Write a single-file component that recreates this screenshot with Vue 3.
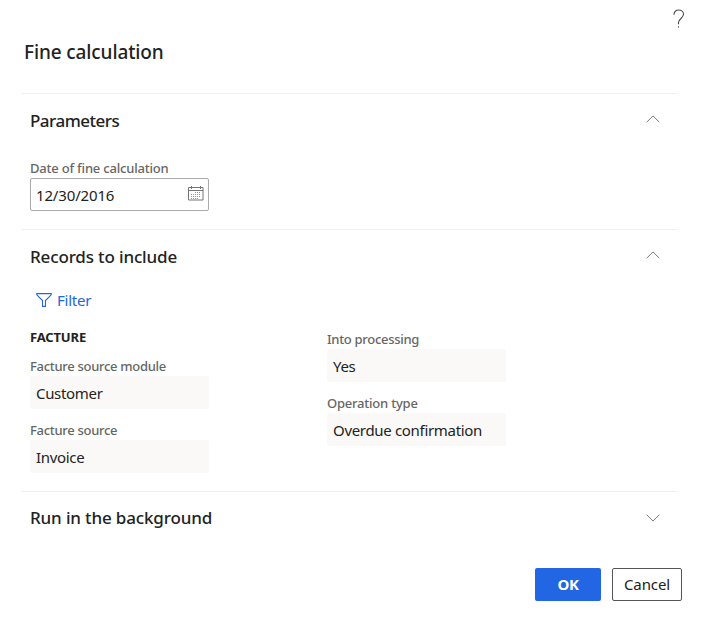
<script setup>
const left = [
  { label: 'Facture source module', value: 'Customer', cls: 'module' },
  { label: 'Facture source', value: 'Invoice', cls: 'source' },
]
const right = [
  { label: 'Into processing', value: 'Yes', cls: 'processing' },
  { label: 'Operation type', value: 'Overdue confirmation', cls: 'operation' },
]
const calendarRows = ['M7 6.5h6', 'M3 8.5h10', 'M3 10.5h10', 'M3 12.5h8']
</script>

<template>
  <main class="dialog">
    <div class="topbar">
      <svg class="help" width="12" height="20" viewBox="0 0 12 20" fill="none" stroke="#4a4a4a" stroke-width="1.1">
        <path d="M1 5.8C1 2.7 3 1 5.7 1s4.8 1.7 4.8 4.3c0 3.7-5 4.7-5 8.3v1.7" />
        <path d="M5.5 17.3v1.3" />
      </svg>
    </div>
    <h1>Fine calculation</h1>

    <section class="parameters">
      <header>
        <h2 class="h-param">Parameters</h2>
        <svg class="chev" width="14" height="8" viewBox="0 0 14 8"><path d="M.6 7.3 7 .9l6.4 6.4" /></svg>
      </header>
      <div class="field date">
        <label>Date of fine calculation</label>
        <div class="input">
          <span>12/30/2016</span>
          <svg width="16" height="15" viewBox="0 0 16 15" fill="none" stroke="#777573">
            <path d="M.5 1.5h14.5v12.5H.5zM.5 4.5h14.5M3.5 0v3M12.5 0v3" />
            <path v-for="row in calendarRows" :key="row" :d="row" stroke="#999" stroke-dasharray="1 1" />
          </svg>
        </div>
      </div>
    </section>

    <section class="records">
      <header>
        <h2 class="h-records">Records to include</h2>
        <svg class="chev" width="14" height="8" viewBox="0 0 14 8"><path d="M.6 7.3 7 .9l6.4 6.4" /></svg>
      </header>
      <button class="filter">
        <svg width="16" height="14" viewBox="0 0 16 14" fill="none" stroke="#2266e3" stroke-width="1.1">
          <path d="M.8.6h14.4v1.2L9.5 7.5v5.9h-3V7.5L.8 1.8z" />
        </svg>
        <span>Filter</span>
      </button>
      <div class="columns">
        <div class="col">
          <h3>FACTURE</h3>
          <div v-for="f in left" :key="f.label" class="field" :class="f.cls">
            <label>{{ f.label }}</label>
            <div class="value"><span>{{ f.value }}</span></div>
          </div>
        </div>
        <div class="col second">
          <div v-for="f in right" :key="f.label" class="field" :class="f.cls">
            <label>{{ f.label }}</label>
            <div class="value"><span>{{ f.value }}</span></div>
          </div>
        </div>
      </div>
    </section>

    <section class="background">
      <header>
        <h2 class="h-run">Run in the background</h2>
        <svg class="chev" width="14" height="8" viewBox="0 0 14 8"><path d="M.6.7 7 7.1 13.4.7" /></svg>
      </header>
    </section>

    <footer>
      <button class="ok">OK</button>
      <button class="cancel">Cancel</button>
    </footer>
  </main>
</template>

<style>
body { background: #fff; }
</style>

<style scoped>
* { box-sizing: border-box; }
.dialog {
  height: 621px;
  display: flex;
  flex-direction: column;
  font-family: "Noto Sans", "Open Sans", sans-serif;
  color: #222;
  overflow: hidden;
}
h1, h2, h3 { margin: 0; font-weight: 500; }
svg { display: block; flex: none; }
button { font: inherit; margin: 0; padding: 0; background: none; border: 0; }
.topbar { height: 32px; display: flex; justify-content: flex-end; padding: 9px 22px 0 0; }
.help { margin-right: -1px; }
h1 { height: 61px; padding-left: 24px; font-size: 19px; line-height: 40px; letter-spacing: -.11px; }
section { margin: 0 29px 0 21px; border-top: 1px solid #efefef; padding-left: 9px; }
header { height: 54px; display: flex; align-items: center; justify-content: space-between; padding-right: 17px; }
h2 { font-size: 17px; line-height: 24px; letter-spacing: -.15px; }
.h-param { letter-spacing: -.5px; }
.chev { fill: none; stroke: #777; stroke-width: 1; margin-top: -4px; }
.parameters { height: 136px; }
.records { height: 262px; }
.background { height: 77px; }
.background header { height: 52px; }
.background .chev { margin-top: -1px; }
.field { width: 179px; }
.field + .field { margin-top: 11px; }
label { display: block; height: 20px; font-size: 13px; line-height: 20px; font-weight: 500; color: #666; white-space: nowrap; letter-spacing: -.3px; }
.date { padding-top: 10px; }
.date label { letter-spacing: -.2px; }
.operation label { letter-spacing: -.22px; }
.input, .value { height: 33px; display: flex; align-items: center; border-radius: 2px; font-size: 15px; white-space: nowrap; color: #222; letter-spacing: -.32px; }
.input { border: 1px solid #aaa; padding: 0 4px 0 5px; justify-content: space-between; letter-spacing: -.15px; }
.input svg { margin-top: -2px; }
.value { background: #faf9f8; padding: 0 6px; }
.filter { display: flex; align-items: center; gap: 5px; height: 32px; padding-left: 6px; font-size: 15px; letter-spacing: -.25px; color: #2266e3; }
.columns { display: flex; gap: 118px; }
.col { width: 179px; }
h3 { height: 40px; font-size: 13px; font-weight: 700; line-height: 42px; letter-spacing: -.15px; }
.second { padding-top: 13px; }
footer { display: flex; justify-content: flex-end; gap: 11px; padding-right: 24px; }
footer button { height: 33px; border-radius: 2px; font-size: 15px; padding-bottom: 2px; }
.ok { width: 66px; background: #2266e3; color: #fff; font-weight: 700; letter-spacing: -.3px; }
.cancel { width: 70px; border: 1px solid #555; color: #222; letter-spacing: -.1px; }
</style>
